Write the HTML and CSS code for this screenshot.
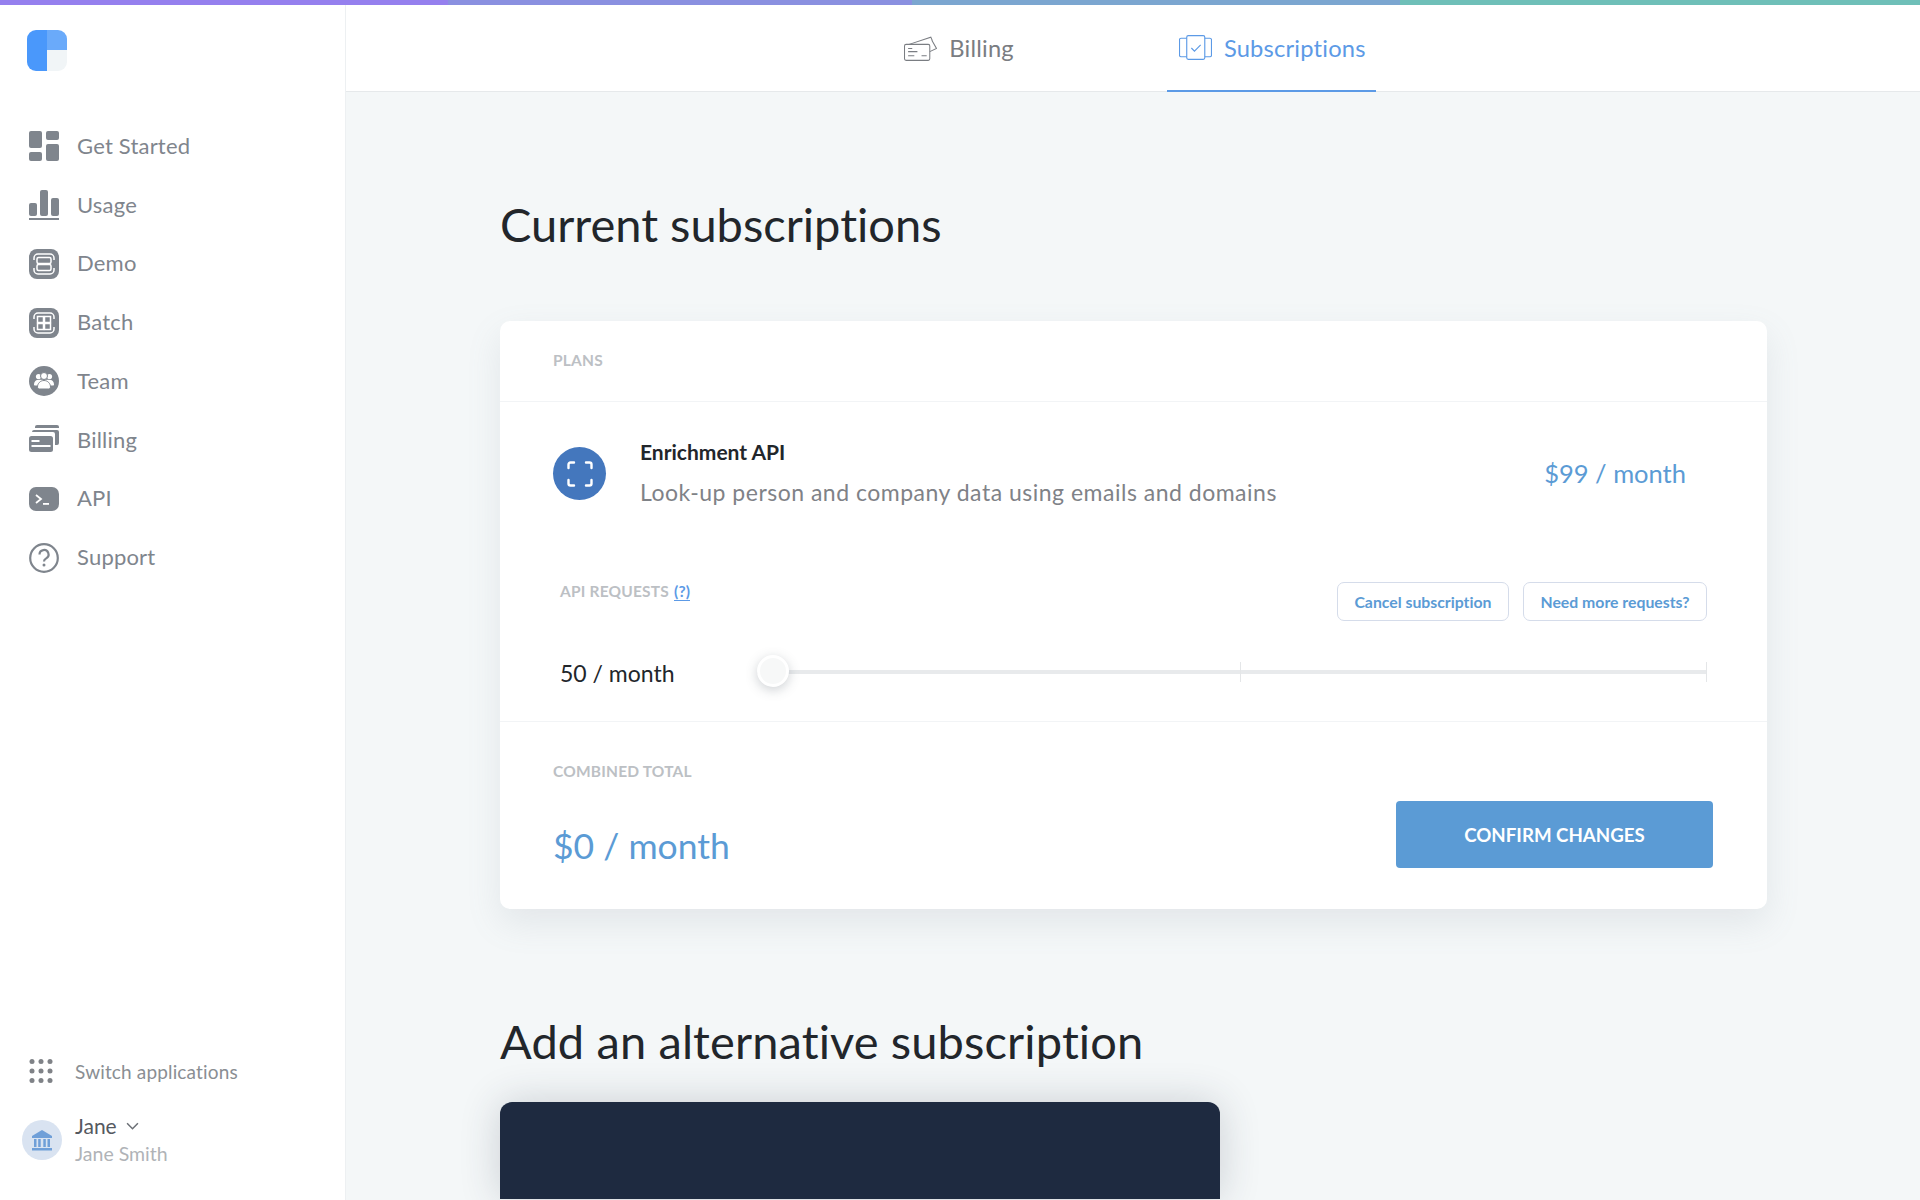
FILE: index.html
```html
<!DOCTYPE html>
<html lang="en">
<head>
<meta charset="utf-8">
<title>Subscriptions</title>
<link rel="stylesheet" href="styles.css">
</head>
<body>
<div class="topline"></div>
<div class="app">
  <aside class="sidebar">
    <svg class="logo" viewBox="0 0 40 41"><path d="M9 0h11v41H9a9 9 0 0 1-9-9V9a9 9 0 0 1 9-9z" fill="#4a98fb"/><path d="M20 0h11a9 9 0 0 1 9 9v11H20z" fill="#6aaafa"/><path d="M20 20h20v12a9 9 0 0 1-9 9H20z" fill="#f1f5f7"/></svg>
    <nav class="nav">
      <a class="nav-item"><svg class="nav-icon" viewBox="0 0 30 30"><rect x="0" y="0" width="13" height="17" rx="2"/><rect x="17" y="0" width="13" height="9" rx="2"/><rect x="0" y="21" width="13" height="9" rx="2"/><rect x="17" y="13" width="13" height="17" rx="2"/></svg><span>Get Started</span></a>
      <a class="nav-item"><svg class="nav-icon" viewBox="0 0 30 30"><rect x="0" y="13" width="8" height="13" rx="2"/><rect x="11" y="0" width="8" height="26" rx="2"/><rect x="22" y="8" width="8" height="18" rx="2"/><rect x="0" y="28" width="30" height="2"/></svg><span>Usage</span></a>
      <a class="nav-item"><svg class="nav-icon" viewBox="0 0 30 30"><rect width="30" height="30" rx="8"/><path d="M5 11V9a4 4 0 0 1 4-4h12a4 4 0 0 1 4 4v2M5 19v2a4 4 0 0 0 4 4h12a4 4 0 0 0 4-4v-2" fill="none" stroke="#fff" stroke-width="1.500"/><rect x="8" y="8.500" width="14" height="6" rx="1.500" fill="none" stroke="#fff" stroke-width="1.500"/><rect x="8" y="15.500" width="14" height="6" rx="1.500" fill="none" stroke="#fff" stroke-width="1.500"/></svg><span>Demo</span></a>
      <a class="nav-item"><svg class="nav-icon" viewBox="0 0 30 30"><rect width="30" height="30" rx="8"/><path d="M5 11V9a4 4 0 0 1 4-4h12a4 4 0 0 1 4 4v2M5 19v2a4 4 0 0 0 4 4h12a4 4 0 0 0 4-4v-2" fill="none" stroke="#fff" stroke-width="1.500"/><rect x="8.500" y="8.500" width="6" height="6" fill="none" stroke="#fff" stroke-width="1.500"/><rect x="15.500" y="8.500" width="6" height="6" fill="none" stroke="#fff" stroke-width="1.500"/><rect x="8.500" y="15.500" width="6" height="6" fill="none" stroke="#fff" stroke-width="1.500"/><rect x="15.500" y="15.500" width="6" height="6" fill="none" stroke="#fff" stroke-width="1.500"/></svg><span>Batch</span></a>
      <a class="nav-item"><svg class="nav-icon" viewBox="0 0 30 30"><circle cx="15" cy="15" r="15"/><g fill="#fff"><circle cx="9.500" cy="10.500" r="2.600"/><circle cx="20.500" cy="10.500" r="2.600"/><path d="M5 18.500c0-3 2-4.800 4.500-4.800h11c2.500 0 4.500 1.800 4.500 4.800 0 .7-.5 1-1 1H6c-.5 0-1-.3-1-1z"/></g><g fill="#fff" stroke="#7f858d" stroke-width="1"><circle cx="15" cy="10" r="3.500"/><path d="M8.500 21c0-3.500 2.800-6.500 6.500-6.500s6.500 3 6.500 6.500c0 1.200-1 2-2 2h-9c-1 0-2-.8-2-2z"/></g></svg><span>Team</span></a>
      <a class="nav-item"><svg class="nav-icon" viewBox="0 0 30 30"><path d="M6 2a2 2 0 0 1 2-2h20a2 2 0 0 1 2 2v1H6z"/><path d="M3 7a2 2 0 0 1 2-2h23a2 2 0 0 1 2 2v11a2 2 0 0 1-2 2h-2V9a2 2 0 0 0-2-2z"/><rect x="0" y="11" width="24" height="16" rx="2.500"/><rect x="2.500" y="15" width="8" height="2" fill="#fff"/><rect x="2.500" y="20" width="19" height="2" fill="#fff"/></svg><span>Billing</span></a>
      <a class="nav-item"><svg class="nav-icon" viewBox="0 0 30 30"><rect x="0" y="3" width="30" height="24" rx="7"/><path d="M7 11l5 4-5 4" fill="none" stroke="#fff" stroke-width="1.800"/><rect x="14" y="19" width="6" height="1.800" fill="#fff"/></svg><span>API</span></a>
      <a class="nav-item"><svg class="nav-icon" viewBox="0 0 30 30"><circle cx="15" cy="15" r="13.800" fill="none" stroke="#7f858d" stroke-width="2.200"/><path d="M10.500 11.500a4.500 4.500 0 1 1 6.700 3.900c-1.400.8-2.200 1.500-2.200 3.100" fill="none" stroke="#7f858d" stroke-width="2.200"/><circle cx="15" cy="22" r="1.500"/></svg><span>Support</span></a>
    </nav>
    <div class="side-bottom">
      <a class="switch"><svg class="dots" viewBox="0 0 24 24"><g fill="#7f8287"><circle cx="3" cy="2.500" r="2.500"/><circle cx="12" cy="2.500" r="2.500"/><circle cx="21" cy="2.500" r="2.500"/><circle cx="3" cy="12" r="2.500"/><circle cx="12" cy="12" r="2.500"/><circle cx="21" cy="12" r="2.500"/><circle cx="3" cy="21.500" r="2.500"/><circle cx="12" cy="21.500" r="2.500"/><circle cx="21" cy="21.500" r="2.500"/></g></svg><span>Switch applications</span></a>
      <div class="user">
        <div class="avatar"><svg viewBox="0 0 22 22" class="bank"><path d="M11 1L1 7v2h20V7z"/><path d="M3 10h2.500v8H3zM7.200 10h2.500v8H7.200zM12.300 10h2.500v8h-2.500zM16.500 10H19v8h-2.500zM1 19h20v2.500H1z"/></svg></div>
        <div class="user-text">
          <div class="user-name">Jane <svg class="chev" viewBox="0 0 12 8"><path d="M1 1l5 5 5-5" fill="none" stroke="#6b6f75" stroke-width="1.400"/></svg></div>
          <div class="user-sub">Jane Smith</div>
        </div>
      </div>
    </div>
  </aside>
  <div class="main">
    <header class="tabs">
      <a class="tab"><svg class="tab-icon" viewBox="0 0 32 24" fill="none" stroke="#7a7d82" stroke-width="1"><rect x=".5" y="8" width="24.500" height="15.500" rx="1.500"/><path d="M5 8l21-7 1.500 3.500M27 4l4.500 8-6.500 3"/><path d="M4 12h4M4 15h9M4 19h6M17 19h5" stroke-width="1.100"/></svg><span>Billing</span></a>
      <a class="tab active"><svg class="tab-icon" viewBox="0 0 32 24" fill="none" stroke="#5c9ae6" stroke-width="1.100"><rect x="7.500" y=".5" width="17.500" height="23" rx="1.500"/><path d="M7.500 3H2a1.500 1.500 0 0 0-1.500 1.500v15A1.500 1.500 0 0 0 2 21h5.500M25 3h5a1.500 1.500 0 0 1 1.500 1.500v15A1.500 1.500 0 0 1 30 21h-5"/><path d="M12 12.500l3 3 6-6"/></svg><span>Subscriptions</span></a>
    </header>
    <main class="content">
      <h1 class="title">Current subscriptions</h1>
      <section class="card">
        <div class="card-head"><span class="label">PLANS</span></div>
        <div class="plan">
          <div class="plan-icon"><svg viewBox="0 0 26 26" fill="none" stroke="#fff" stroke-width="2.400" stroke-linecap="round"><path d="M1.500 7V3.500a2 2 0 0 1 2-2H7M19 1.500h3.500a2 2 0 0 1 2 2V7M1.500 19v3.500a2 2 0 0 0 2 2H7M19 24.500h3.500a2 2 0 0 0 2-2V19"/></svg></div>
          <div class="plan-text">
            <div class="plan-name">Enrichment API</div>
            <div class="plan-desc">Look-up person and company data using emails and domains</div>
          </div>
          <div class="plan-price">$99 / month</div>
        </div>
        <div class="requests">
          <div class="req-top">
            <span class="label">API REQUESTS <a class="help">(?)</a></span>
            <div class="req-actions"><a class="btn-outline">Cancel subscription</a><a class="btn-outline">Need more requests?</a></div>
          </div>
          <div class="req-slider">
            <span class="req-value">50 / month</span>
            <div class="slider"><i class="tick tick-mid"></i><i class="tick tick-end"></i><i class="thumb"></i></div>
          </div>
        </div>
        <div class="total">
          <div class="total-left">
            <span class="label">COMBINED TOTAL</span>
            <div class="total-value">$0 / month</div>
          </div>
          <a class="btn-primary">CONFIRM CHANGES</a>
        </div>
      </section>
      <h2 class="title second">Add an alternative subscription</h2>
      <section class="dark-card"></section>
    </main>
  </div>
</div>
</body>
</html>
```
FILE: styles.css
```css
* { box-sizing: border-box; }
html, body { margin: 0; height: 100%; overflow: hidden; }
body { font-family: Lato, "Open Sans", sans-serif; font-variant-ligatures: none; background: #f4f7f8; color: #22262b; }
.topline { height: 5px; background: linear-gradient(90deg, #9580ee 0, #9580ee 448px, #8a90e0 448px, #8a90e0 912px, #7ba6d0 912px, #7ba6d0 1400px, #6fbfb8 1400px, #6fbfb8 100%); }
.app { display: flex; height: 1195px; }
.sidebar { width: 346px; flex: none; background: #fff; border-right: 1px solid #edf0f2; display: flex; flex-direction: column; padding: 25px 0 35px; }
.logo { width: 40px; height: 41px; margin-left: 27px; flex: none; }
.nav { display: flex; flex-direction: column; margin-top: 46px; }
.nav-item { display: flex; align-items: center; height: 58.75px; padding-left: 29px; color: #7f858d; font-size: 22px; letter-spacing: .2px; gap: 18px; }
.nav-item span { padding-bottom: 2px; }
.nav-icon { width: 30px; height: 30px; fill: #7f858d; flex: none; }
.side-bottom { margin-top: auto; display: flex; flex-direction: column; gap: 31px; }
.switch { display: flex; align-items: center; padding-left: 29px; gap: 22px; color: #8a8e93; font-size: 19px; letter-spacing: .15px; }
.dots { width: 24px; height: 24px; flex: none; }
.user { display: flex; align-items: center; padding-left: 22px; gap: 13px; }
.avatar { width: 40px; height: 40px; border-radius: 50%; background: #d9e3f1; display: flex; align-items: center; justify-content: center; }
.bank { width: 22px; height: 22px; fill: #6f9fd8; }
.user-text { display: flex; flex-direction: column; gap: 5px; }
.user-name { font-size: 21px; line-height: 24px; color: #55595f; display: flex; align-items: center; gap: 9px; }
.chev { width: 13px; height: 9px; }
.user-sub { font-size: 19.500px; line-height: 22px; color: #b0b3b7; }
.main { flex: 1; min-width: 0; display: flex; flex-direction: column; }
.tabs { height: 87px; flex: none; background: #fff; border-bottom: 1px solid #e6e9eb; display: flex; justify-content: center; gap: 143px; padding-left: 2px; }
.tab { display: flex; align-items: center; gap: 12px; padding: 0 10px 1px 12px; color: #7a7d82; font-size: 23.700px; letter-spacing: .2px; height: 87px; }
.tab.active { color: #5c9ae6; border-bottom: 2px solid #5c9ae6; padding-bottom: 0; }
.tab-icon { width: 33px; height: 25px; flex: none; }
.content { padding: 0 153px 0 154px; flex: 1; min-height: 0; }
.title { font-weight: 400; font-size: 47px; line-height: 56px; margin: 0; color: #22262b; }
.content > .title:first-child { margin-top: 104px; }
.card { margin-top: 69px; height: 588px; background: #fff; border-radius: 10px; box-shadow: 0 14px 34px rgba(120, 135, 150, .14); display: flex; flex-direction: column; }
.card-head { height: 81px; border-bottom: 1px solid #f2f4f6; display: flex; align-items: center; padding: 0 0 2px 53px; }
.label { font-size: 15.500px; font-weight: 700; letter-spacing: .2px; color: #bcc0c4; }
.help { color: #5c9ae6; border-bottom: 1px solid #5c9ae6; margin-left: 1px; }
.plan { display: flex; padding: 36px 81px 0 53px; height: 180px; align-items: flex-start; }
.plan-icon { width: 53px; height: 53px; border-radius: 50%; background: #4477bd; display: flex; align-items: center; justify-content: center; flex: none; margin-top: 9px; }
.plan-icon svg { width: 26px; height: 26px; }
.plan-text { margin-left: 34px; flex: 1; }
.plan-name { font-size: 21px; font-weight: 700; line-height: 28px; color: #22262b; }
.plan-desc { font-size: 23px; letter-spacing: .5px; line-height: 30px; color: #7f8287; margin-top: 11px; }
.plan-price { font-size: 25.500px; line-height: 32px; color: #5b9bd5; margin-top: 19px; }
.requests { height: 140px; border-bottom: 1px solid #f2f4f6; padding: 0 60px; }
.req-top { display: flex; justify-content: space-between; height: 39px; }
.req-actions { display: flex; gap: 14px; }
.btn-outline { height: 39px; border: 1px solid #d5dcea; border-radius: 7px; padding: 0 16.500px; display: flex; align-items: center; color: #5b9bd5; font-size: 15.800px; font-weight: 700; }
.req-slider { display: flex; align-items: center; margin-top: 38px; }
.req-value { font-size: 23px; width: 197px; color: #22262b; }
.slider { position: relative; flex: 1; height: 4px; margin-top: -2px; background: #e8eaec; }
.tick { position: absolute; width: 1px; height: 20px; top: -8px; background: #e4e6e8; }
.tick-mid { left: 483px; }
.tick-end { right: 0; }
.thumb { position: absolute; left: 0; top: -15px; width: 32px; height: 32px; border-radius: 50%; background: #f7f8f8; border: 3px solid #fff; box-shadow: 0 3px 12px rgba(80, 90, 100, .28); }
.total { flex: 1; display: flex; justify-content: space-between; padding: 39px 54px 0 53px; }
.total-value { font-size: 35.500px; line-height: 44px; color: #5b9bd5; margin-top: 44px; }
.btn-primary { width: 317px; height: 67px; margin-top: 40px; background: #5b9bd5; color: #fff; font-size: 18.700px; font-weight: 700; border-radius: 4px; display: flex; align-items: center; justify-content: center; }
.second { margin-top: 104px; letter-spacing: .12px; }
.dark-card { width: 720px; height: 97px; margin-top: 33px; background: #1e2a40; border-radius: 12px 12px 0 0; box-shadow: 0 0 40px rgba(40, 50, 70, .2); }
```
